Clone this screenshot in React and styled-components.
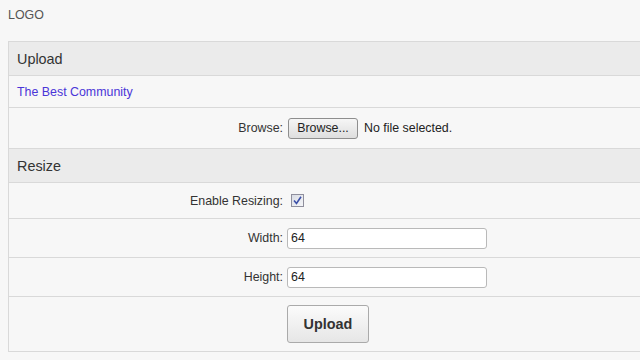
import React from "react";
import styled, { createGlobalStyle } from "styled-components";

const Global = createGlobalStyle`
  html, body { background: #f7f7f7; }
  body {
    margin: 8px 0 0 8px;
    font-family: "Liberation Sans", Arial, sans-serif;
    font-size: 12.4px;
    color: #333;
    overflow: hidden;
  }
`;

const Logo = styled.div`
  height: 33px;
  font-size: 12.4px;
  line-height: 14px;
  color: #555;
`;

const Panel = styled.div`
  border: 1px solid #d9d9d9;
  border-right: none;
  background: #f7f7f7;
`;

const Header = styled.div`
  height: 33px;
  display: flex;
  align-items: center;
  padding-left: 8px;
  background: #ebebeb;
  border-bottom: 1px solid #d9d9d9;
  font-size: 14.4px;
  color: #333;
`;

const LinkRow = styled.div`
  height: 31px;
  display: flex;
  align-items: center;
  padding-left: 8px;
  border-bottom: 1px solid #d9d9d9;
`;

const CommunityLink = styled.a`
  color: #4a35d8;
  text-decoration: none;
  font-size: 12.4px;
`;

const Row = styled.div`
  display: grid;
  grid-template-columns: 274px 1fr;
  column-gap: 4px;
  align-items: center;
  height: ${(p) => p.$h}px;
  border-bottom: ${(p) => (p.$last ? "none" : "1px solid #d9d9d9")};
`;

const Label = styled.label`
  text-align: right;
  font-size: 12.4px;
  color: #333;
`;

const Value = styled.div`
  display: flex;
  align-items: center;
`;

const BrowseButton = styled.button`
  margin-left: 1px;
  width: 70px;
  height: 21px;
  padding: 0;
  font-family: "Liberation Sans", Arial, sans-serif;
  font-size: 12.4px;
  color: #222;
  border: 1px solid #8e8e8e;
  border-radius: 3px;
  background: linear-gradient(#f6f6f6, #dedede);
`;

const FileName = styled.span`
  margin-left: 6px;
  font-size: 12.4px;
  color: #222;
`;

const CheckBox = styled.span`
  margin-left: 4px;
  width: 11px;
  height: 11px;
  border: 1px solid #8f8f9d;
  background: linear-gradient(135deg, #d9dce4, #f4f5f8);
  display: flex;
  align-items: center;
  justify-content: center;
`;

const TextInput = styled.input`
  box-sizing: border-box;
  width: 200px;
  height: 21px;
  padding: 0 3px;
  border: 1px solid #b9b9b9;
  border-radius: 3px;
  background: #fff;
  font-family: "Liberation Sans", Arial, sans-serif;
  font-size: 12.4px;
  color: #222;
  outline: none;
`;

const SubmitButton = styled.button`
  width: 82px;
  height: 38px;
  padding: 0;
  font-family: "Liberation Sans", Arial, sans-serif;
  font-size: 14.4px;
  font-weight: bold;
  color: #333;
  border: 1px solid #aaa;
  border-radius: 3px;
  background: linear-gradient(#fbfbfb, #e6e6e6);
`;

export default function App() {
  return (
    <>
      <Global />
      <Logo>LOGO</Logo>
      <Panel>
        <Header>Upload</Header>
        <LinkRow>
          <CommunityLink href="#">The Best Community</CommunityLink>
        </LinkRow>
        <Row $h={40}>
          <Label>Browse:</Label>
          <Value>
            <BrowseButton type="button">Browse...</BrowseButton>
            <FileName>No file selected.</FileName>
          </Value>
        </Row>
        <Header>Resize</Header>
        <Row $h={35}>
          <Label>Enable Resizing:</Label>
          <Value>
            <CheckBox>
              <svg width="9" height="9" viewBox="0 0 9 9">
                <path d="M1 4.5 L3.5 7.5 L8 0.8" fill="none" stroke="#3b4fa8" strokeWidth="1.6" />
              </svg>
            </CheckBox>
          </Value>
        </Row>
        <Row $h={38}>
          <Label>Width:</Label>
          <Value>
            <TextInput defaultValue="64" />
          </Value>
        </Row>
        <Row $h={38}>
          <Label>Height:</Label>
          <Value>
            <TextInput defaultValue="64" />
          </Value>
        </Row>
        <Row $h={54} $last>
          <span />
          <Value>
            <SubmitButton type="button">Upload</SubmitButton>
          </Value>
        </Row>
      </Panel>
    </>
  );
}
